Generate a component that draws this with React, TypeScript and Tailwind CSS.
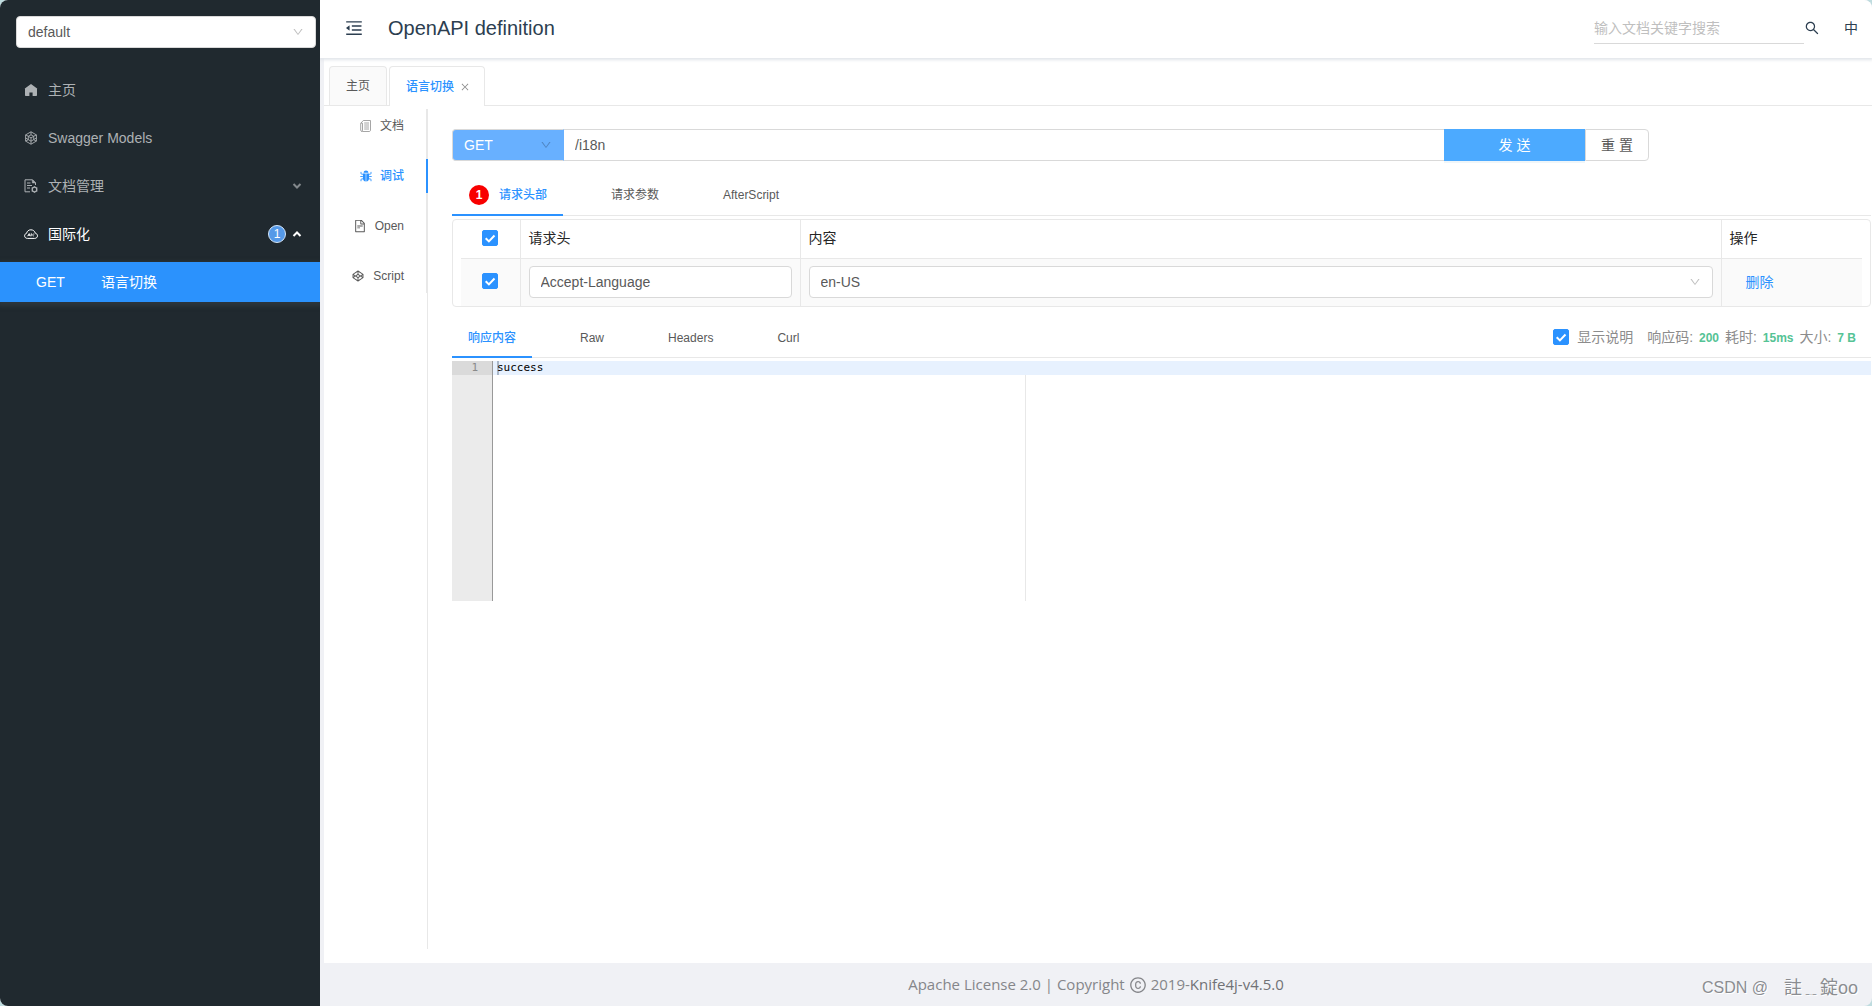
import { useState, type ReactNode } from "react";
import {
  AiOutlineClose,
  AiOutlineCodepen,
  AiOutlineCopyright,
  AiOutlineDown,
  AiOutlineFileText,
  AiOutlineMenuFold,
  AiOutlineSearch,
} from "react-icons/ai";

const HomeIcon = () => (
  <svg viewBox="0 0 14 14" className="size-3.5" fill="currentColor">
    <path d="M7 1 .9 5.6c-.2.2-.2.5.1.6V12c0 .6.4 1 1 1h3.4V9.6h3.2V13H12c.6 0 1-.4 1-1V6.2c.3-.1.3-.4.1-.6z" />
  </svg>
);

const ModelsIcon = () => (
  <svg viewBox="0 0 14 14" className="size-3.5" fill="none" stroke="currentColor" strokeWidth=".9">
    <path d="M7 .8 12.4 3.9v6.2L7 13.2 1.6 10.1V3.9z" />
    <path d="M7 .8v3M1.6 3.9 4.4 5.3M12.4 3.9 9.6 5.3M1.6 10.1l2.8-1.4M12.4 10.1 9.6 8.700M7 13.2v-3M7 3.800 9.7 5.300v3.300L7 10.200 4.300 8.600V5.300zM4.300 5.300 7 6.900l2.700-1.600M7 6.900v3.300M1.600 6.900l2.700 1.700M12.400 6.900 9.700 8.600" />
  </svg>
);

const DocManageIcon = () => (
  <svg viewBox="0 0 14 14" className="size-3.5" fill="none" stroke="currentColor">
    <path d="M6 12.800H1V.8h7.500l3 3V6" />
    <path d="M8.300.8v3.200h3.200z" fill="currentColor" strokeWidth=".5" />
    <path d="M3 4h3.500M3 6.500h5M3 9h3" />
    <circle cx="10.500" cy="10.500" r="2.300" strokeWidth="1.300" />
    <path d="M10.500 7.200v1M10.500 12.800v1M7.600 8.900l.9.500M12.500 11.600l.9.500M7.600 12.100l.9-.5M12.500 9.400l.9-.5" strokeWidth=".9" />
  </svg>
);

const CloudIcon = () => (
  <svg viewBox="0 0 14 14" className="size-3.5" fill="none" stroke="currentColor">
    <path d="M3.400 11.400C1.700 11.400.6 10.200.6 8.800c0-1.200.8-2.200 2-2.500C3 4.100 4.700 2.800 6.900 2.800s3.900 1.300 4.400 3.400c1.300.3 2.200 1.300 2.200 2.600 0 1.500-1.200 2.600-2.800 2.600z" />
    <path d="M3.600 9.200 5.200 6.600l1.200 2.600M4.200 8.300h1.800M7.200 9.200V6.700l2.600 2.500M9.800 6.500v1.200" strokeWidth=".9" />
  </svg>
);

const PagesIcon = () => (
  <svg viewBox="0 0 12 12" className="size-3" fill="none" stroke="#8f8f8f" strokeWidth=".8">
    <path d="M3.300.5h7.200v9.500c0 .9-.5 1.500-1.400 1.500H2.300c-.9 0-1.600-.6-1.600-1.500V3.200h1.800M3.300.5 1 3v0M2.500 3.200V10c0 .8-.4 1.300-1 1.400" />
    <path d="M4.200 3h4.800M4.200 5h4.800M4.200 7h4.800M4.200 9h4.800" />
  </svg>
);

const BugIcon = () => (
  <svg viewBox="0 0 12 12" className="size-3" fill="currentColor">
    <path d="M3.600 2.700C3.700 1.200 4.600.4 6 .4s2.300.8 2.400 2.300zM3 3.400h2.700v8C4 11.300 2.900 10 2.900 8.200zM6.300 3.400H9l.1 4.800c0 1.800-1.100 3.100-2.800 3.200z" />
    <path d="M1 1.900v1.500c0 .5.300.8.800.8H3m8-2.300v1.500c0 .5-.3.800-.8.800H9M.3 6.500h2.600m6.200 0h2.600M1 11.200V9.700c0-.5.300-.8.800-.8H3m8 2.300V9.700c0-.5-.3-.8-.8-.8H9" fill="none" stroke="currentColor" strokeWidth=".9" />
  </svg>
);

function Caret({ up = false }: { up?: boolean }) {
  return (
    <svg viewBox="0 0 10 10" className={up ? "size-2.5" : "size-2.5 opacity-70"} fill="none" stroke="currentColor" strokeWidth="2">
      <path d={up ? "M1.500 7 5 3.500 8.500 7" : "M1.500 3 5 6.500 8.500 3"} />
    </svg>
  );
}

function Check({ label, children }: { label: string; children?: ReactNode }) {
  const [on, setOn] = useState(true);
  return (
    <label className="inline-flex items-center gap-2">
      <span className="grid size-4">
        <input
          type="checkbox"
          aria-label={label}
          checked={on}
          onChange={() => setOn(!on)}
          className="col-start-1 row-start-1 size-4 appearance-none rounded-xs border border-[#d9d9d9] bg-white checked:border-[#2b92ff] checked:bg-[#2b92ff]"
        />
        {on && (
          <svg viewBox="0 0 16 16" className="pointer-events-none col-start-1 row-start-1 size-4" fill="none" stroke="#fff" strokeWidth="2">
            <path d="m3.700 8.200 3.200 3.200 5.600-5.900" />
          </svg>
        )}
      </span>
      {children}
    </label>
  );
}

function Select({ label, value, box, arrow }: { label: string; value: string; box: string; arrow: string }) {
  return (
    <div className="grid w-full items-center">
      <select aria-label={label} defaultValue={value} className={"col-start-1 row-start-1 h-8 w-full appearance-none border px-[11px] text-sm " + box}>
        <option>{value}</option>
      </select>
      <AiOutlineDown className={"pointer-events-none col-start-1 row-start-1 mr-3 size-3 justify-self-end " + arrow} />
    </div>
  );
}

function MenuItem({ icon, text, active, children }: { icon: ReactNode; text: string; active?: boolean; children?: ReactNode }) {
  return (
    <li>
      <button className={"flex h-10 w-full items-center gap-2.5 pr-[18px] pl-6 text-sm " + (active ? "text-white" : "text-[#adb1b4]")}>
        {icon}
        <span className="flex-1 text-left">{text}</span>
        {children}
      </button>
    </li>
  );
}

function Tab({ active, children }: { active?: boolean; children: ReactNode }) {
  return (
    <button
      role="tab"
      aria-selected={!!active}
      className={"flex items-center border-b-2 px-4 text-xs " + (active ? "border-[#2b92ff] font-medium text-[#2b92ff]" : "border-transparent text-[#595959]")}
    >
      {children}
    </button>
  );
}

function SideTab({ icon, text, active }: { icon: ReactNode; text: string; active?: boolean }) {
  return (
    <button
      role="tab"
      aria-selected={!!active}
      className={"flex h-[34px] items-center justify-end gap-2 border-r-2 pr-[22px] text-xs " + (active ? "border-[#2b92ff] font-medium text-[#2b92ff]" : "border-[#e8e8e8] text-[#595959]")}
    >
      {icon}
      {text}
    </button>
  );
}

function Sidebar() {
  return (
    <aside className="z-20 flex w-80 shrink-0 flex-col overflow-hidden bg-[#20292f]">
      <div className="px-4 pt-4 pr-1">
        <Select label="group" value="default" box="rounded-sm border-[#d9d9d9] bg-white text-[#595959]" arrow="text-[#bfbfbf]" />
      </div>
      <nav className="mt-[22px]">
        <ul className="flex flex-col gap-2">
          <MenuItem icon={<HomeIcon />} text="主页" />
          <MenuItem icon={<ModelsIcon />} text="Swagger Models" />
          <MenuItem icon={<DocManageIcon />} text="文档管理">
            <Caret />
          </MenuItem>
          <MenuItem icon={<CloudIcon />} text="国际化" active>
            <span className="-mr-1 grid size-[18px] place-items-center rounded-full border border-[#d5e6f8] bg-[#5599e8] text-xs leading-none text-white">1</span>
            <Caret up />
          </MenuItem>
        </ul>
        <a href="#i18n" className="mt-2 flex h-10 items-center bg-[#2b92fd] pl-9 text-sm text-white shadow-[0_2px_4px_2px_#2c363c]">
          <span className="w-[65px]">GET</span>语言切换
        </a>
      </nav>
    </aside>
  );
}

function Header() {
  return (
    <header className="z-10 flex h-[58px] shrink-0 items-center bg-white pr-3.5 pb-0.5 pl-6 text-[#2c3e50] shadow-[0_1px_3px_1px_#e1e5ea]">
      <button aria-label="collapse menu">
        <AiOutlineMenuFold className="size-5" />
      </button>
      <h1 className="ml-6 flex-1 text-xl">OpenAPI definition</h1>
      <input
        aria-label="search"
        placeholder="输入文档关键字搜索"
        className="h-8 w-[210px] border-b border-[#d9d9d9] bg-transparent text-sm placeholder:text-[#bfbfbf]"
      />
      <button aria-label="search">
        <AiOutlineSearch className="size-4" />
      </button>
      <button className="ml-6 text-sm">中</button>
    </header>
  );
}

function RequestTable() {
  const cell = "border-r border-[#e8e8e8] px-2";
  return (
    <div className="mt-[3px] rounded-sm border border-[#e8e8e8] px-2">
      <table className="w-full table-fixed text-left text-sm">
        <colgroup>
          <col className="w-[59px]" />
          <col className="w-[280px]" />
          <col />
          <col className="w-[141px]" />
        </colgroup>
        <thead className="text-[#262626]">
          <tr className="h-[38px] border-b border-[#e8e8e8]">
            <th className={cell + " text-center leading-none"}>
              <Check label="select all" />
            </th>
            <th className={cell + " pb-0.5 font-normal"}>请求头</th>
            <th className={cell + " pb-0.5 font-normal"}>内容</th>
            <th className="px-2 pb-0.5 font-normal">操作</th>
          </tr>
        </thead>
        <tbody>
          <tr className="h-12 bg-[#fafafa]">
            <td className={cell + " text-center leading-none"}>
              <Check label="select row" />
            </td>
            <td className={cell}>
              <input aria-label="header name" defaultValue="Accept-Language" className="h-8 w-full rounded-sm border border-[#d9d9d9] bg-white px-[11px] text-[#595959]" />
            </td>
            <td className={cell}>
              <Select label="header value" value="en-US" box="rounded-sm border-[#d9d9d9] bg-white text-[#595959]" arrow="text-[#bfbfbf]" />
            </td>
            <td className="px-6">
              <button className="text-[#2b92ff]">删除</button>
            </td>
          </tr>
        </tbody>
      </table>
    </div>
  );
}

function Stat({ name, value }: { name: string; value: string }) {
  return (
    <span>
      {name}: <b className="ml-0.5 text-xs text-[#55c395]">{value}</b>
    </span>
  );
}

function Debug() {
  return (
    <section className="min-w-0 flex-1 pt-5 pr-px pl-6">
      <form className="mr-[222px] flex" onSubmit={(e) => e.preventDefault()}>
        <div className="w-28">
          <Select label="method" value="GET" box="rounded-l-sm border-[#d9d9d9] border-r-[#68b0ff] bg-[#68b0ff] text-white" arrow="text-[#4f86c4]" />
        </div>
        <input aria-label="path" defaultValue="/i18n" className="h-8 min-w-0 flex-1 border-y border-[#d9d9d9] px-[11px] text-sm text-[#595959]" />
        <button className="h-8 w-[141px] bg-[#4caaff] text-sm text-white shadow-[0_2px_0_#f0f6f9]">发 送</button>
        <button className="h-8 w-16 rounded-r-sm border border-[#d9d9d9] text-sm text-[#595959]">重 置</button>
      </form>

      <div role="tablist" className="mt-3.5 flex h-[41px] gap-8 border-b border-[#e8e8e8] *:-mb-px">
        <Tab active>
          <span className="mr-2.5 ml-px grid size-5 place-items-center rounded-full bg-[#f80000] font-semibold text-white">1</span>
          请求头部
        </Tab>
        <Tab>请求参数</Tab>
        <Tab>AfterScript</Tab>
      </div>
      <RequestTable />

      <div className="mt-3 flex h-[39px] justify-between border-b border-[#e8e8e8]">
        <div role="tablist" className="-mb-px flex gap-8">
          <Tab active>响应内容</Tab>
          <Tab>Raw</Tab>
          <Tab>Headers</Tab>
          <Tab>Curl</Tab>
        </div>
        <div className="flex items-center gap-1.5 pr-[15px] pb-0.5 text-sm text-[#8c8c8c]">
          <Check label="显示说明">
            <span className="mr-2">显示说明</span>
          </Check>
          <Stat name="响应码" value="200" />
          <Stat name="耗时" value="15ms" />
          <Stat name="大小" value="7 B" />
        </div>
      </div>

      <div className="mt-[3px] flex h-60 font-['DejaVu_Sans_Mono',monospace] text-[11px] leading-[14px]">
        <div className="w-[41px] border-r border-[#999] bg-[#ebebeb] text-[#8a8a8a]">
          <div className="bg-[#dadada] pr-3.5 text-right">1</div>
        </div>
        <div className="grid flex-1 grid-rows-[14px_1fr]">
          <div className="bg-[#e7f1fe] pl-1 text-black">
            <span className="inline-block h-3.5 border-l-2 border-[#a9b7c9]">
              <span className="-ml-0.5">success</span>
            </span>
          </div>
          <div className="w-[533px] border-r border-[#e8e8e8]" />
        </div>
      </div>
    </section>
  );
}

export default function App() {
  return (
    <div className="bg-[#bfdcdf] font-['Liberation_Sans','Noto_Sans_CJK_SC',sans-serif]">
      <div className="flex min-h-screen overflow-hidden rounded-lg bg-[#f0f1f5]">
        <Sidebar />
        <div className="flex min-w-0 flex-1 flex-col">
          <Header />
          <main className="ml-1 flex flex-1 flex-col bg-white pt-2">
            <div role="tablist" className="flex items-end gap-0.5 border-b border-[#e8e8e8] pl-[5px]">
              <button role="tab" aria-selected="false" className="h-[39px] rounded-t-sm border border-b-0 border-[#e8e8e8] bg-[#fafafa] px-4 text-xs text-[#595959]">
                主页
              </button>
              <div className="-mb-px flex h-10 items-center gap-1.5 rounded-t-sm border border-b-0 border-[#e8e8e8] bg-white pr-3.5 pl-4">
                <button role="tab" aria-selected="true" className="text-xs font-medium text-[#2b92ff]">
                  语言切换
                </button>
                <button aria-label="close tab" className="text-[#8c8c8c]">
                  <AiOutlineClose className="size-2.5" />
                </button>
              </div>
            </div>
            <div className="flex flex-1 pt-[3px] pb-3.5">
              <div className="flex w-[104px] border-r border-[#e8e8e8]">
                <div role="tablist" className="-mr-px flex flex-1 flex-col gap-4 self-start bg-[linear-gradient(#e8e8e8,#e8e8e8)] bg-[length:2px_100%] bg-right bg-no-repeat">
                  <SideTab icon={<PagesIcon />} text="文档" />
                  <SideTab icon={<BugIcon />} text="调试" active />
                  <SideTab icon={<AiOutlineFileText className="size-3.5" />} text="Open" />
                  <SideTab icon={<AiOutlineCodepen className="size-3.5" />} text="Script" />
                </div>
              </div>
              <Debug />
            </div>
          </main>
          <footer className="grid h-[43px] shrink-0 grid-cols-[1fr_auto_1fr] items-center font-['Open_Sans','Noto_Sans_CJK_JP',sans-serif] text-[#85868a]">
            <p className="col-start-2 flex items-center gap-1 text-[15px]">
              Apache License 2.0 | Copyright
              <AiOutlineCopyright className="size-[18px]" />
              <span>
                2019-
                <a href="#knife4j" className="text-[#717276]">
                  Knife4j-v4.5.0
                </a>
              </span>
            </p>
            <p className="mr-3.5 flex items-center gap-4 justify-self-end pt-1.5 font-['Liberation_Sans','Noto_Sans_CJK_JP',sans-serif] text-base text-[#8b8d91] [text-shadow:1px_1px_0_#fff]">
              <span>CSDN @</span>
              <span className="text-lg">註﹎錠oo</span>
            </p>
          </footer>
        </div>
      </div>
    </div>
  );
}
